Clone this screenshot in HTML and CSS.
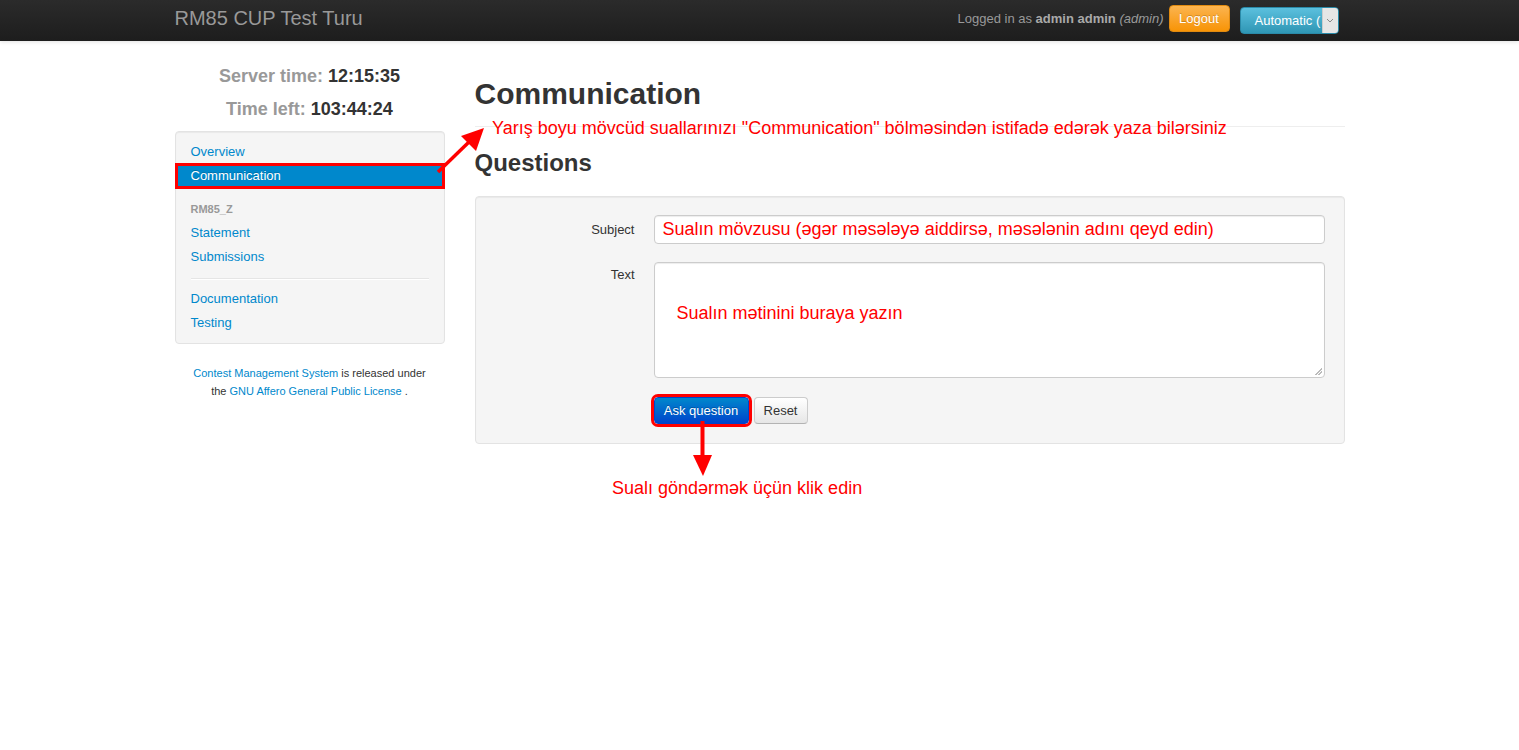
FILE: index.html
```html
<!DOCTYPE html>
<html lang="az">
<head>
<meta charset="utf-8">
<title>RM85 CUP Test Turu - Communication</title>
<link rel="stylesheet" href="styles.css">
</head>
<body>
<div class="navbar">
  <div class="container nav-inner">
    <a class="brand">RM85 CUP Test Turu</a>
    <div class="nav-right">
      <span class="logged">Logged in as <b>admin admin</b> <i>(admin)</i></span>
      <button class="btn-logout">Logout</button>
      <div class="lang-select"><span class="lang-text">Automatic (</span><span class="lang-arrow"><svg width="8" height="5" viewBox="0 0 8 5"><path d="M1 1 L4 4 L7 1" fill="none" stroke="#888" stroke-width="1"/></svg></span></div>
    </div>
  </div>
</div>

<div class="container page">
  <div class="sidebar">
    <p class="clock"><span class="lbl">Server time:</span> <span class="val">12:15:35</span></p>
    <p class="clock"><span class="lbl">Time left:</span> <span class="val">103:44:24</span></p>
    <ul class="well nav-list">
      <li><a>Overview</a></li>
      <li class="active"><a>Communication</a></li>
      <li class="nav-header">RM85_Z</li>
      <li><a>Statement</a></li>
      <li><a>Submissions</a></li>
      <li class="divider"></li>
      <li><a>Documentation</a></li>
      <li><a>Testing</a></li>
    </ul>
    <p class="footer"><a>Contest Management System</a> is released under<br>the <a>GNU Affero General Public License</a> .</p>
  </div>

  <div class="main">
    <div class="page-header"><h1>Communication</h1></div>
    <h2>Questions</h2>
    <div class="well form-well">
      <div class="control-group group-subject">
        <label class="control-label">Subject</label>
        <div class="controls"><div class="input">Sualın mövzusu (əgər məsələyə aiddirsə, məsələnin adını qeyd edin)</div></div>
      </div>
      <div class="control-group">
        <label class="control-label label-text">Text</label>
        <div class="controls"><div class="textarea"><span class="ta-text">Sualın mətinini buraya yazın</span><span class="grip"></span></div></div>
      </div>
      <div class="control-group buttons">
        <div class="controls">
          <button class="btn btn-primary">Ask question</button>
          <button class="btn btn-reset">Reset</button>
        </div>
      </div>
    </div>
  </div>
</div>

<div class="note note-top">Yarış boyu mövcüd suallarınızı "Communication" bölməsindən istifadə edərək yaza bilərsiniz</div>
<div class="note note-bottom">Sualı göndərmək üçün klik edin</div>

<svg class="arrows" width="1519" height="750" viewBox="0 0 1519 750">
  <line x1="438" y1="172" x2="470" y2="141" stroke="#ff0000" stroke-width="3.5"/>
  <polygon points="484,128 461,136 476,151" fill="#ff0000"/>
  <line x1="702.5" y1="421" x2="702.5" y2="458" stroke="#ff0000" stroke-width="4"/>
  <polygon points="693,455 712,455 703,476" fill="#ff0000"/>
</svg>
</body>
</html>
```

FILE: styles.css
```css
* { box-sizing: border-box; }
html, body { margin: 0; padding: 0; }
body {
  font-family: "Liberation Sans", Arial, Helvetica, sans-serif;
  font-size: 13px;
  line-height: 18px;
  color: #333;
  background: #fff;
  position: relative;
  min-height: 750px;
}
a { color: #0088cc; text-decoration: none; }
.container { width: 1170px; margin: 0 auto; }

/* navbar */
.navbar {
  height: 41px;
  background: linear-gradient(#2b2b2b, #1d1d1d);
  box-shadow: 0 1px 4px rgba(0,0,0,0.12);
}
.nav-inner { display: flex; align-items: center; justify-content: space-between; height: 41px; }
.brand { font-size: 20px; color: #999; line-height: 20px; margin-top: -5px; }
.nav-right { display: flex; align-items: center; margin-right: 6px; }
.logged { color: #999; font-size: 13px; margin-top: -4px; }
.logged b { color: #a9a9a9; }
.logged i { color: #999; }
.btn-logout {
  margin-left: 5px;
  margin-top: -4px;
  width: 61px; height: 27px;
  font-family: inherit; font-size: 13px; color: #fff;
  background: linear-gradient(#fbb450, #f89406);
  border: 1px solid #e08a10;
  border-radius: 4px;
  text-shadow: 0 -1px 0 rgba(0,0,0,0.2);
  padding: 0;
}
.lang-select {
  margin-left: 10px;
  width: 99px; height: 27px;
  display: flex;
  border: 1px solid #2a8aa8;
  border-radius: 4px;
  overflow: hidden;
  background: linear-gradient(#5bc0de, #2f96b4);
}
.lang-text { flex: 1; color: #fff; font-size: 13px; line-height: 25px; padding-left: 14px; white-space: nowrap; }
.lang-arrow { width: 16px; flex: none; background: #e6e6e6; display: flex; align-items: center; justify-content: center; border-left: 1px solid #ccc; }

/* page */
.page { display: flex; gap: 30px; }
.sidebar { width: 270px; flex: none; padding-top: 22px; }
.main { width: 870px; flex: none; padding-top: 33px; }

.clock { margin: 0 0 10px; text-align: center; font-size: 18px; line-height: 24px; font-weight: bold; }
.clock:first-child { margin-top: 1px; margin-bottom: 9px; }
.clock .lbl { color: #999; }
.clock .val { color: #333; }

.well {
  background: #f5f5f5;
  border: 1px solid #e3e3e3;
  border-radius: 4px;
  box-shadow: inset 0 1px 1px rgba(0,0,0,0.05);
}
.nav-list { list-style: none; margin: 0; padding: 8px 0 8px; }
.nav-list li a { display: block; padding: 3px 15px; line-height: 18px; font-size: 13px; color: #0088cc; }
.nav-list li.active a {
  color: #fff;
  background: #0088cc;
  outline: 3px solid #ff0000;
  outline-offset: -2px;
  text-shadow: 0 -1px 0 rgba(0,0,0,0.2);
}
.nav-list .nav-header {
  margin-top: 9px;
  padding: 3px 15px;
  font-size: 11px; line-height: 18px; font-weight: bold;
  color: #999; text-transform: uppercase;
}
.nav-list .divider {
  margin: 9px 15px 7px;
  box-sizing: content-box;
  height: 1px;
  background: #e5e5e5;
  border-bottom: 1px solid #fff;
}
.footer { margin: 20px 0 0; text-align: center; font-size: 11px; line-height: 18px; color: #333; }

/* main */
.page-header { border-bottom: 1px solid #eee; padding-bottom: 12px; margin: 0 0 21px; }
h1 { margin: 0; font-size: 30px; line-height: 40px; font-weight: bold; color: #333; }
h2 { margin: 0 0 18px; font-size: 24px; line-height: 30px; font-weight: bold; color: #333; }

.form-well { padding: 18px 19px 0; }
.control-group { display: flex; margin-bottom: 19px; }
.group-subject { margin-bottom: 18px; }
.control-label { width: 140px; flex: none; text-align: right; padding-top: 6px; font-size: 13px; line-height: 18px; color: #333; margin-right: 19px; }
.label-text { padding-top: 4px; }
.controls { flex: 1; }
.input {
  height: 29px;
  background: #fff;
  border: 1px solid #ccc;
  border-radius: 4px;
  box-shadow: inset 0 1px 1px rgba(0,0,0,0.075);
  padding: 0 8px;
  font-size: 18px; line-height: 27px; color: #ff0000;
  white-space: nowrap; overflow: hidden;
}
.textarea {
  position: relative;
  height: 116px;
  background: #fff;
  border: 1px solid #ccc;
  border-radius: 4px;
  box-shadow: inset 0 1px 1px rgba(0,0,0,0.075);
  padding: 39px 22px 0;
  font-size: 18px; line-height: 22px; color: #ff0000;
}
.grip {
  position: absolute; right: 2px; bottom: 2px;
  width: 8px; height: 8px;
  background: linear-gradient(135deg, transparent 55%, #bbb 55%, #bbb 65%, transparent 65%, transparent 75%, #bbb 75%, #bbb 85%, transparent 85%);
}
.buttons { margin-bottom: 0; padding-bottom: 19px; }
.buttons .controls { padding-left: 159px; display: flex; align-items: center; }
.btn {
  font-family: inherit; font-size: 13px; line-height: 18px;
  height: 27px; padding: 0;
  border-radius: 4px; cursor: pointer;
  white-space: nowrap;
}
.btn-primary {
  width: 95px;
  color: #fff;
  background: linear-gradient(#0088cc, #0044cc);
  border: 1px solid #0044cc;
  outline: 3px solid #ff0000;
  outline-offset: 0px;
  text-shadow: 0 -1px 0 rgba(0,0,0,0.25);
}
.btn-reset {
  margin-left: 5px;
  width: 54px;
  color: #333;
  background: linear-gradient(#fff, #e6e6e6);
  border: 1px solid #ccc;
  border-bottom-color: #b3b3b3;
}

/* annotations */
.note { position: absolute; color: #ff0000; font-size: 18px; line-height: 22px; white-space: nowrap; }
.note-top { left: 492px; top: 117px; }
.note-bottom { left: 612px; top: 477px; }
.arrows { position: absolute; left: 0; top: 0; pointer-events: none; }
```
